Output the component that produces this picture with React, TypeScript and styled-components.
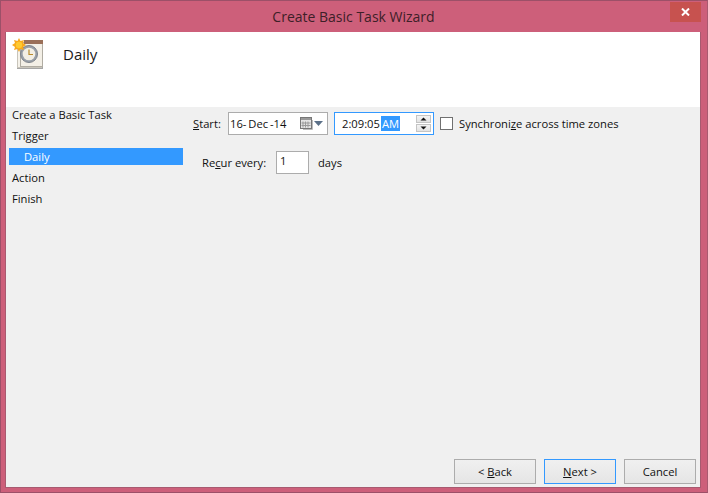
import React from 'react';
import styled, { createGlobalStyle } from 'styled-components';

const GlobalStyle = createGlobalStyle`
  html, body {
    margin: 0;
    padding: 0;
    background: #cd5f7a;
  }
  * {
    box-sizing: border-box;
  }
`;

const Frame = styled.div`
  width: 708px;
  height: 493px;
  display: flex;
  flex-direction: column;
  background: #cd5f7a;
  border: 1px solid #9c5068;
  border-right-color: #a85a70;
  font-family: 'Open Sans', 'Noto Sans', sans-serif;
  font-size: 11.2px;
  color: #111;
  overflow: hidden;
`;

const TitleBar = styled.div`
  height: 31px;
  flex: none;
  display: grid;
  grid-template-columns: 1fr auto 1fr;
  align-items: start;
  padding: 0 6px 0 5px;
`;

const Title = styled.div`
  grid-column: 2;
  font-size: 14px;
  line-height: 20px;
  margin-top: 6px;
  color: #3d2028;
`;

const CloseButton = styled.div`
  grid-column: 3;
  justify-self: end;
  width: 31px;
  height: 20px;
  margin-top: 1px;
  background: #c7524f;
  display: flex;
  align-items: center;
  justify-content: center;
`;

const Client = styled.div`
  flex: 1;
  margin: 0 6px 4px 4px;
  display: flex;
  flex-direction: column;
  border-left: 1px solid #a85a70;
  border-right: 1px solid #a85a70;
  border-bottom: 1px solid #a85a70;
  background: #f0f0f0;
`;

const Header = styled.div`
  height: 75px;
  flex: none;
  background: #fff;
  display: flex;
  align-items: flex-start;
  padding: 5px 0 0 5px;
`;

const HeaderTitle = styled.div`
  font-size: 15px;
  line-height: 20px;
  margin: 7px 0 0 18px;
  color: #1a1a1a;
`;

const Body = styled.div`
  flex: 1;
  display: flex;
  min-height: 0;
`;

const Nav = styled.div`
  width: 177px;
  flex: none;
  padding: 0 0 0 3px;
  display: flex;
  flex-direction: column;
  gap: 4px;
  margin-top: -1px;
`;

const NavItem = styled.div<{ $active?: boolean }>`
  height: 17px;
  line-height: 17px;
  padding-left: ${({ $active }) => ($active ? '15px' : '3px')};
  background: ${({ $active }) => ($active ? '#3399ff' : 'transparent')};
  color: ${({ $active }) => ($active ? '#fff' : '#111')};
  white-space: nowrap;
`;

const Main = styled.div`
  flex: 1;
  display: flex;
  flex-direction: column;
  padding-left: 10px;
`;

const Form = styled.div`
  flex: 1;
  display: flex;
  flex-direction: column;
  padding-top: 5px;
  gap: 17px;
`;

const StartRow = styled.div`
  display: flex;
  align-items: center;
  height: 22px;
`;

const RecurRow = styled.div`
  display: flex;
  align-items: center;
  height: 23px;
  padding-left: 9px;
`;

const Label = styled.span<{ $width: number }>`
  width: ${({ $width }) => $width}px;
  flex: none;
  white-space: nowrap;
`;

const Field = styled.div<{ $focused?: boolean; $width: number; $gap?: number }>`
  width: ${({ $width }) => $width}px;
  height: 23px;
  flex: none;
  margin-left: ${({ $gap }) => $gap ?? 0}px;
  background: #fff;
  border: 1px solid ${({ $focused }) => ($focused ? '#3399ff' : '#acacac')};
  display: flex;
  align-items: center;
  justify-content: space-between;
  white-space: nowrap;
`;

const DateText = styled.span`
  padding-left: 1px;
  word-spacing: -1px;
`;

const DateIcons = styled.span`
  display: flex;
  align-items: center;
  gap: 1px;
  padding-right: 4px;
`;

const TimeText = styled.span`
  padding-left: 7px;
`;

const Selected = styled.span`
  background: #3399ff;
  color: #fff;
  padding: 0 1px;
  margin-left: 1px;
`;

const Spinner = styled.div`
  display: flex;
  flex-direction: column;
  gap: 1px;
  padding-right: 2px;
`;

const SpinButton = styled.div`
  width: 15px;
  height: 8px;
  background: linear-gradient(#f4f4f4, #e2e2e2);
  border: 1px solid #c4c4c4;
  display: flex;
  align-items: center;
  justify-content: center;
`;

const Checkbox = styled.div`
  width: 13px;
  height: 13px;
  flex: none;
  margin: 0 6px;
  background: #fff;
  border: 1px solid #707070;
`;

const NumberInput = styled.div`
  width: 33px;
  height: 23px;
  flex: none;
  background: #fff;
  border: 1px solid #acacac;
  padding-left: 3px;
  line-height: 17px;
`;

const Days = styled.span`
  margin-left: 9px;
`;

const Footer = styled.div`
  display: flex;
  justify-content: flex-end;
  gap: 8px;
  padding: 0 4px 3px 0;
`;

const Button = styled.div<{ $primary?: boolean; $width: number }>`
  width: ${({ $width }) => $width}px;
  height: 25px;
  line-height: 23px;
  text-align: center;
  background: linear-gradient(#f0f0f0, #e5e5e5);
  border: 1px solid ${({ $primary }) => ($primary ? '#3399ff' : '#acacac')};
`;

const Underlined = styled.span`
  text-decoration: underline;
`;

const TaskIcon = () => (
  <svg width="34" height="34" viewBox="0 0 34 34">
    <rect x="6" y="6" width="26" height="26" fill="#a6a6a6" />
    <rect x="6.5" y="5.5" width="24" height="25" fill="#f5f2ea" stroke="#c8c4ba" />
    <rect x="9.5" y="5.5" width="22" height="24" fill="#f3efe6" stroke="#b0aca2" />
    <rect x="13" y="3" width="19" height="4" fill="#9a6f58" />
    <circle cx="18" cy="17" r="8.5" fill="#9aa0a8" stroke="#7d828a" />
    <circle cx="18" cy="17" r="6.3" fill="#f3efe4" />
    <path d="M18 12.5V17.5H22" fill="none" stroke="#b88a2a" strokeWidth="1.2" />
    <path
      d="M8 1L9.5 4 13 3 12 6 15 8 12 10 13 13 9.5 12 8 15 6.5 12 3 13 4 10 1 8 4 6 3 3 6.5 4Z"
      fill="#f8a81c"
    />
    <circle cx="8" cy="8" r="3.2" fill="#ffc92e" />
  </svg>
);

const CloseIcon = () => (
  <svg width="9" height="8" viewBox="0 0 9 8">
    <path d="M1 0.5L8 7.5M8 0.5L1 7.5" stroke="#fff" strokeWidth="2" />
  </svg>
);

const CalendarIcon = () => (
  <svg width="13" height="13" viewBox="0 0 13 13">
    <rect x="0.5" y="0.5" width="11" height="11" fill="#e4e4e4" stroke="#777" />
    <rect x="1" y="1" width="10" height="2" fill="#999" />
    <path
      d="M3 4.5V10.5M5.5 4.5V10.5M8 4.5V10.5M1.5 6H10.5M1.5 8.5H10.5"
      stroke="#9a9a9a"
      strokeWidth="1"
    />
    <path d="M12.5 3V12.5H3" fill="none" stroke="#bbb" />
  </svg>
);

const Caret = () => (
  <svg width="9" height="5" viewBox="0 0 9 5">
    <path d="M0 0H9L4.5 5Z" fill="#5b7088" />
  </svg>
);

const SpinArrow = ({ up }: { up?: boolean }) => (
  <svg width="7" height="4" viewBox="0 0 7 4">
    <path d={up ? 'M3.5 0.5L6.5 3.5H0.5Z' : 'M0.5 0.5H6.5L3.5 3.5Z'} fill="#111" />
  </svg>
);

const App: React.FC = () => {
  return (
    <>
      <GlobalStyle />
      <Frame>
        <TitleBar>
          <Title>Create Basic Task Wizard</Title>
          <CloseButton>
            <CloseIcon />
          </CloseButton>
        </TitleBar>
        <Client>
          <Header>
            <TaskIcon />
            <HeaderTitle>Daily</HeaderTitle>
          </Header>
          <Body>
            <Nav>
              <NavItem>Create a Basic Task</NavItem>
              <NavItem>Trigger</NavItem>
              <NavItem $active>Daily</NavItem>
              <NavItem>Action</NavItem>
              <NavItem>Finish</NavItem>
            </Nav>
            <Main>
              <Form>
                <StartRow>
                  <Label $width={35}>
                    <Underlined>S</Underlined>tart:
                  </Label>
                  <Field $width={100}>
                    <DateText>16- Dec -14</DateText>
                    <DateIcons>
                      <CalendarIcon />
                      <Caret />
                    </DateIcons>
                  </Field>
                  <Field $focused $width={100} $gap={6}>
                    <TimeText>
                      2:09:05<Selected>AM</Selected>
                    </TimeText>
                    <Spinner>
                      <SpinButton>
                        <SpinArrow up />
                      </SpinButton>
                      <SpinButton>
                        <SpinArrow />
                      </SpinButton>
                    </Spinner>
                  </Field>
                  <Checkbox />
                  <span>
                    Synchroni<Underlined>z</Underlined>e across time zones
                  </span>
                </StartRow>
                <RecurRow>
                  <Label $width={74}>
                    Re<Underlined>c</Underlined>ur every:
                  </Label>
                  <NumberInput>1</NumberInput>
                  <Days>days</Days>
                </RecurRow>
              </Form>
              <Footer>
                <Button $width={82}>
                  &lt; <Underlined>B</Underlined>ack
                </Button>
                <Button $primary $width={72}>
                  <Underlined>N</Underlined>ext &gt;
                </Button>
                <Button $width={72}>Cancel</Button>
              </Footer>
            </Main>
          </Body>
        </Client>
      </Frame>
    </>
  );
};

export default App;
